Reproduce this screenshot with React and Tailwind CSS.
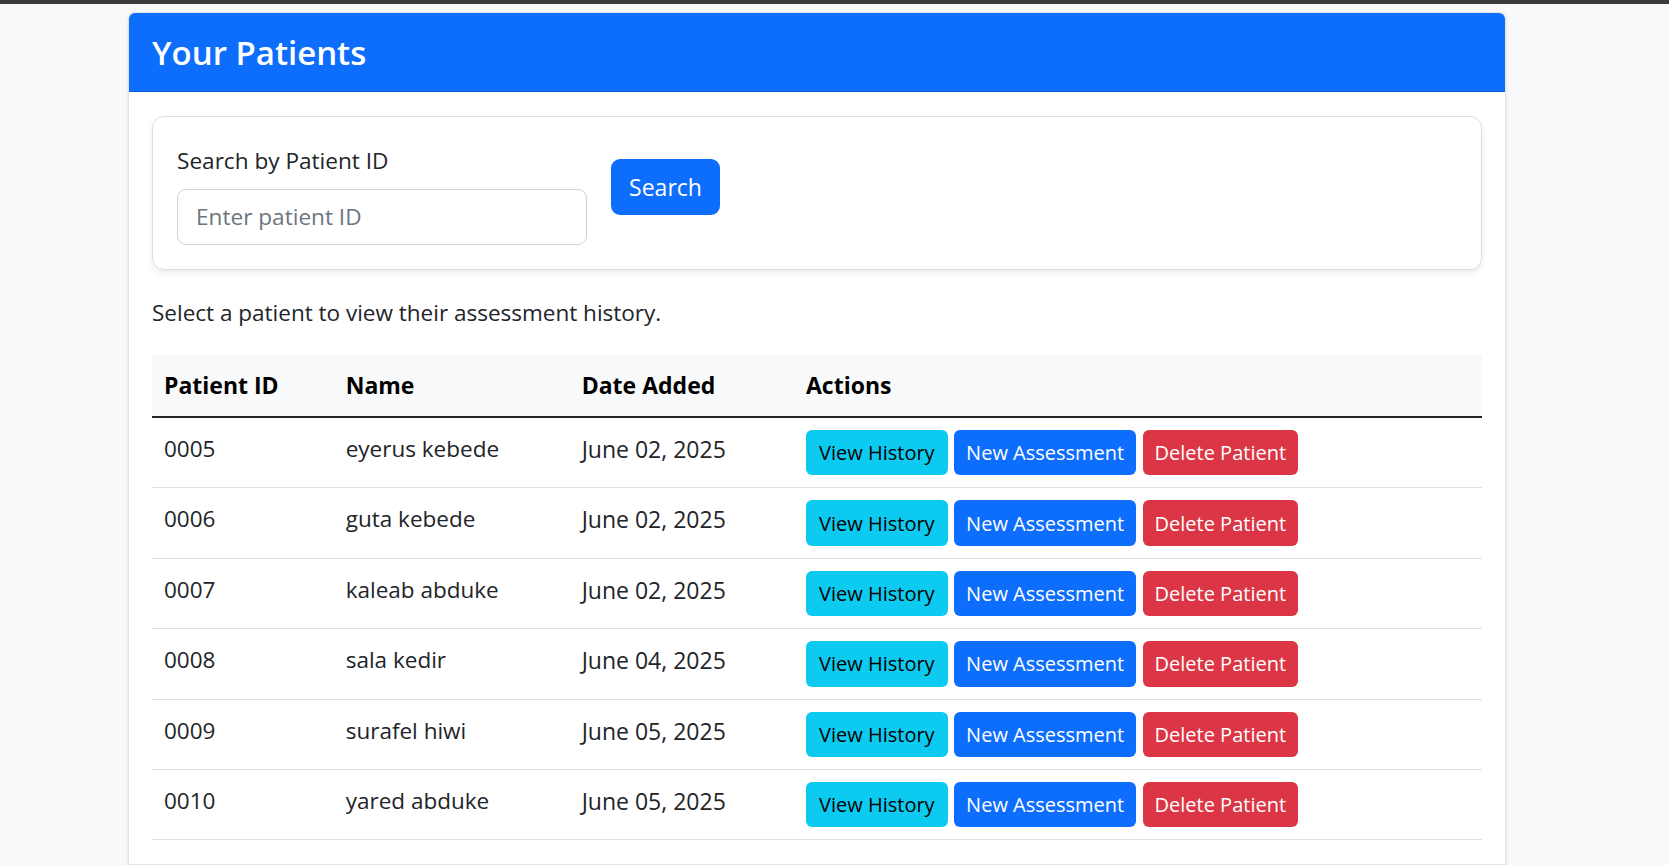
const patients = [
  { id: "0005", name: "eyerus kebede", date: "June 02, 2025" },
  { id: "0006", name: "guta kebede", date: "June 02, 2025" },
  { id: "0007", name: "kaleab abduke", date: "June 02, 2025" },
  { id: "0008", name: "sala kedir", date: "June 04, 2025" },
  { id: "0009", name: "surafel hiwi", date: "June 05, 2025" },
  { id: "0010", name: "yared abduke", date: "June 05, 2025" },
];

const App = () => {
  return (
    <div className="min-h-screen bg-[#f8f9fa] font-['Open_Sans',sans-serif] text-[#212529]">
      <div className="h-[4px] bg-[#3a3a3a]" />
      <div className="ml-[128px] mt-2 w-[1378px] rounded-t-[7px] border border-[#e2e3e5] bg-white shadow-sm">
        <div className="h-[79px] rounded-t-[6px] border-b border-[#0b5ed7] bg-[#0d6efd] px-[23px] pt-[20px]">
          <h1 className="text-[33px] font-semibold leading-[40px] text-white">Your Patients</h1>
        </div>

        <div className="px-[23px] pt-6 pb-6">
          <div className="rounded-[12px] border border-[#dcdcdc] p-6 shadow-[0_3px_6px_rgba(0,0,0,0.08)]">
            <div className="flex items-start gap-6">
              <div className="w-[410px]">
                <label className="mt-[2px] mb-[10px] block text-[22.6px] leading-[36px]">
                  Search by Patient ID
                </label>
                <input
                  type="text"
                  placeholder="Enter patient ID"
                  className="h-[55.5px] w-full rounded-[9px] border border-[#ced4da] bg-white px-[18px] text-[22.6px] outline-none placeholder:text-[#6c757d]"
                />
              </div>
              <button className="mt-[18px] flex h-[56px] w-[109px] items-center justify-center rounded-[9px] bg-[#0d6efd] pt-[1px] text-[23px] text-white">
                Search
              </button>
            </div>
          </div>

          <p className="mt-[25px] mb-[24px] text-[22.5px] leading-[36px]">
            Select a patient to view their assessment history.
          </p>

          <table className="w-full table-fixed border-separate border-spacing-0 text-left">
            <thead>
              <tr className="bg-[#f8f9fa] text-black">
                <th className="w-[181.7px] border-b-2 border-[#212529] px-3 pt-[12px] pb-[13.5px] text-[23px] font-bold leading-[36px]">
                  Patient ID
                </th>
                <th className="w-[236px] border-b-2 border-[#212529] px-3 pt-[12px] pb-[13.5px] text-[23px] font-bold leading-[36px]">
                  Name
                </th>
                <th className="w-[224.3px] border-b-2 border-[#212529] px-3 pt-[12px] pb-[13.5px] text-[23px] font-bold leading-[36px]">
                  Date Added
                </th>
                <th className="border-b-2 border-[#212529] px-3 pt-[12px] pb-[13.5px] text-[23px] font-bold leading-[36px]">
                  Actions
                </th>
              </tr>
            </thead>
            <tbody>
              {patients.map((p) => (
                <tr key={p.id}>
                  <td className="border-b border-[#dee2e6] px-3 pt-[13px] align-top text-[22.5px] leading-[36px]">
                    {p.id}
                  </td>
                  <td className="border-b border-[#dee2e6] px-3 pt-[13px] align-top text-[22.5px] leading-[36px]">
                    {p.name}
                  </td>
                  <td className="border-b border-[#dee2e6] px-3 pt-[13px] align-top text-[23px] leading-[36px]">
                    {p.date}
                  </td>
                  <td className="border-b border-[#dee2e6] px-3 py-3 align-top">
                    <div className="flex gap-[6.5px]">
                      <button className="flex h-[45.4px] w-[141.7px] items-center justify-center rounded-[6px] bg-[#0dcaf0] pt-[1px] text-[20px] text-black">
                        View History
                      </button>
                      <button className="flex h-[45.4px] w-[182px] items-center justify-center rounded-[6px] bg-[#0d6efd] pt-[1px] text-[20px] text-white">
                        New Assessment
                      </button>
                      <button className="flex h-[45.4px] w-[155.3px] items-center justify-center rounded-[6px] bg-[#dc3545] pt-[1px] text-[20px] text-white">
                        Delete Patient
                      </button>
                    </div>
                  </td>
                </tr>
              ))}
            </tbody>
          </table>
        </div>
      </div>
    </div>
  );
};

export default App;
